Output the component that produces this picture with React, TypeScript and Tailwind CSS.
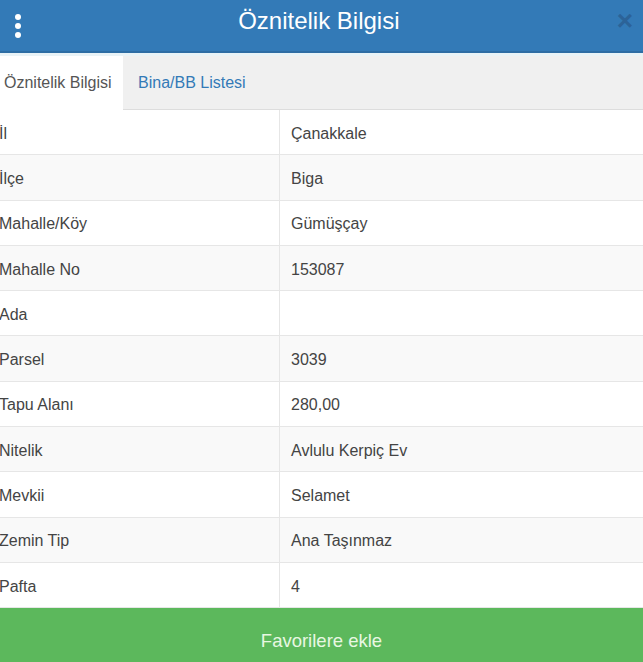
export default function App() {
  const rows: [string, string][] = [
    ["İl", "Çanakkale"],
    ["İlçe", "Biga"],
    ["Mahalle/Köy", "Gümüşçay"],
    ["Mahalle No", "153087"],
    ["Ada", ""],
    ["Parsel", "3039"],
    ["Tapu Alanı", "280,00"],
    ["Nitelik", "Avlulu Kerpiç Ev"],
    ["Mevkii", "Selamet"],
    ["Zemin Tip", "Ana Taşınmaz"],
    ["Pafta", "4"],
  ];

  return (
    <div
      className="w-[643px] h-[662px] overflow-hidden bg-white flex flex-col text-[#444]"
      style={{ fontFamily: '"Liberation Sans", Arial, sans-serif' }}
    >
      {/* header */}
      <div className="h-[51px] bg-[#337ab7] flex items-center justify-between pl-[15px] pr-[10px] shrink-0">
        <div className="flex flex-col gap-[3px]">
          <span className="block size-[6px] rounded-full bg-white" />
          <span className="block size-[6px] rounded-full bg-white" />
          <span className="block size-[6px] rounded-full bg-white" />
        </div>
        <h1 className="text-[24px] text-white leading-none -mt-[10px]">Öznitelik Bilgisi</h1>
        <span className="text-[28px] font-bold text-[#2c6398] leading-none -mt-[10px]">×</span>
      </div>
      <div className="h-[2px] bg-[#2e6da4] shrink-0" />
      <div className="h-[3px] bg-[#e9f3f7] shrink-0" />

      {/* tabs */}
      <div className="h-[54px] bg-[#f0f0f0] border-b border-[#ddd] flex shrink-0">
        <div className="w-[123px] bg-white flex items-center pl-[4px] text-[16px] text-[#555] -mb-px">
          Öznitelik Bilgisi
        </div>
        <div className="flex items-center pl-[15px] text-[16px] text-[#337ab7]">Bina/BB Listesi</div>
      </div>

      {/* table */}
      <div className="flex flex-col">
        {rows.map(([k, v], i) => (
          <div
            key={k}
            className={`h-[45.3px] grid grid-cols-[280px_1fr] border-b border-[#e6e6e6] text-[16px] ${
              i % 2 === 1 ? "bg-[#f9f9f9]" : "bg-white"
            }`}
          >
            <div className="flex items-center -ml-[1px] pt-[3px] border-r border-[#e6e6e6]">{k}</div>
            <div className="flex items-center pl-[11px] pt-[3px]">{v}</div>
          </div>
        ))}
      </div>

      <button className="flex-1 bg-[#5cb85c] text-[#e8f7e2] text-[18.5px] flex items-center justify-center pt-[12px]">
        Favorilere ekle
      </button>
    </div>
  );
}
